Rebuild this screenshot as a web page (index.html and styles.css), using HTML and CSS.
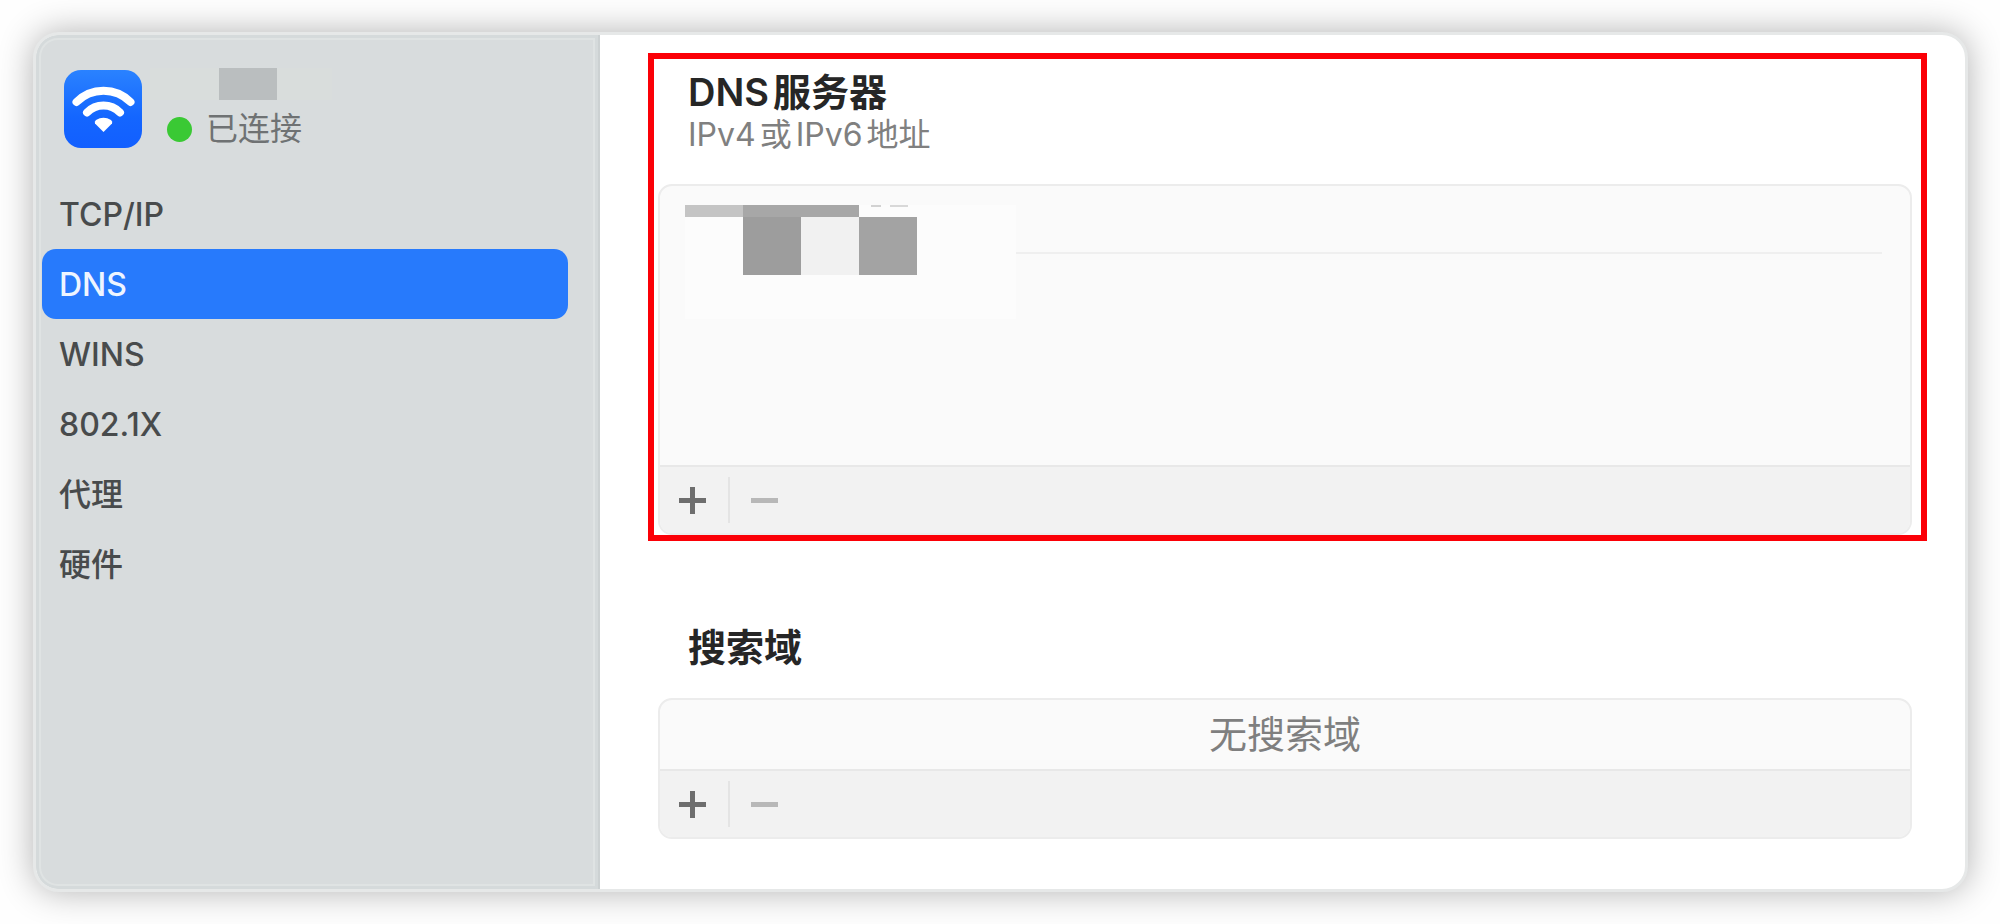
FILE: index.html
```
<!DOCTYPE html>
<html lang="zh-CN">

<head>
    <meta charset="UTF-8">
    <meta name="viewport" content="width=device-width, initial-scale=1.0">
    <title>DNS</title>
    <link rel="stylesheet" href="styles.css">
</head>

<body>
    <div class="window">
        <aside class="sidebar">
            <div class="network">
                <svg class="wifi-icon" viewBox="0 0 78 78" aria-hidden="true">
                    <defs>
                        <linearGradient id="wifi-bg" x1="0" y1="0" x2="0" y2="1">
                            <stop offset="0" stop-color="#2a82ff"/>
                            <stop offset="0.6" stop-color="#1466ff"/>
                            <stop offset="1" stop-color="#125fff"/>
                        </linearGradient>
                    </defs>
                    <rect width="78" height="78" rx="17" fill="url(#wifi-bg)"/>
                    <g fill="none" stroke="#fff" stroke-width="8" stroke-linecap="round">
                        <path d="M12.500 32a38 38 0 0 1 54 0"/>
                        <path d="M23 42.500a23 23 0 0 1 33 0"/>
                    </g>
                    <path d="M39.500 62l-8.500-8.500q-1-2 1-3.500q7.500-4.500 15 0q2 1.500 1 3.500z" fill="#fff"/>
                </svg>
                <div class="network-info">
                    <div class="name-mask"><span></span></div>
                    <div class="status"><span class="dot"></span>已连接</div>
                </div>
            </div>
            <nav class="menu">
                <a href="#tcpip">TCP/IP</a>
                <a href="#dns" class="active">DNS</a>
                <a href="#wins">WINS</a>
                <a href="#8021x">802.1X</a>
                <a href="#proxy">代理</a>
                <a href="#hardware">硬件</a>
            </nav>
        </aside>

        <main class="content">
            <section class="dns-servers">
                <h2>DNS<span class="cjk">服务器</span></h2>
                <p class="hint">IPv4<span class="cjk">或</span>IPv6<span class="cjk">地址</span></p>
                <div class="list-box">
                    <div class="list">
                        <div class="server-mask">
                            <span class="strip light"></span>
                            <span class="strip dark"></span>
                            <span class="strip dashes"></span>
                            <span class="cell first"></span>
                            <span class="cell second"></span>
                            <span class="cell third"></span>
                        </div>
                        <div class="row-line"></div>
                    </div>
                    <div class="toolbar">
                        <button type="button" class="add" aria-label="添加DNS服务器"></button>
                        <button type="button" class="remove" aria-label="移除DNS服务器" disabled></button>
                    </div>
                </div>
            </section>

            <section class="search-domains">
                <h2>搜索域</h2>
                <div class="list-box">
                    <div class="empty">无搜索域</div>
                    <div class="toolbar">
                        <button type="button" class="add" aria-label="添加搜索域"></button>
                        <button type="button" class="remove" aria-label="移除搜索域" disabled></button>
                    </div>
                </div>
            </section>
        </main>
    </div>
</body>

</html>
```
FILE: styles.css
```
* {
    box-sizing: border-box;
}

body {
    margin: 0;
    padding: 32px 32px 32px 33px;
    min-height: 100vh;
    display: flex;
    font-family: Inter, "Noto Sans CJK SC", sans-serif;
    background-color: #fefefe;
}

.window {
    flex: 1;
    display: flex;
    background-color: #fff;
    border: 3px solid #e6e8e8;
    border-radius: 26px;
    overflow: hidden;
    box-shadow: 0 0 34px rgba(0, 0, 0, 0.3);
}

.sidebar {
    width: 564px;
    padding: 33px 30px 0 6px;
    background-color: #d8dcdd;
    border-right: 2px solid #ccd1d2;
    border-radius: 22px 0 0 22px;
    box-shadow: inset 0 0 0 3px #d5dadb, inset 0 0 0 5px #dfe3e3;
}

.network {
    display: flex;
    gap: 8px;
    padding-left: 22px;
}

.wifi-icon {
    width: 78px;
    height: 78px;
    margin-top: 2px;
}

.name-mask {
    width: 182px;
    height: 32px;
    background-color: #d9dddc;
}

.name-mask span {
    display: block;
    width: 58px;
    height: 32px;
    margin-left: 69px;
    background-color: #babebf;
}

.status {
    display: flex;
    align-items: center;
    gap: 14px;
    margin-top: 9px;
    padding-left: 17px;
    font-size: 32px;
    line-height: 40px;
    color: #6f7273;
}

.dot {
    width: 25px;
    height: 25px;
    border-radius: 50%;
    background-color: #3ac934;
}

.menu {
    margin-top: 30px;
}

.menu a {
    display: block;
    padding: 2px 0 0 17px;
    border-radius: 14px;
    font-size: 32px;
    font-weight: 500;
    line-height: 68px;
    color: #484b4c;
    text-decoration: none;
}

.menu a.active {
    background-color: #277afc;
    color: #eef5ff;
}

.content {
    flex: 1;
    padding: 18px 38px 0 48px;
}

h2 {
    margin: 0;
    font-size: 38px;
    line-height: 44px;
    font-weight: 600;
    color: #262626;
}

.cjk {
    margin: 0 4px;
}

.dns-servers {
    padding: 11px 9px 0 4px;
    border: 6px solid #fb0007;
}

.dns-servers h2,
.dns-servers .hint,
.search-domains h2 {
    padding-left: 30px;
}

.hint {
    margin: 0;
    font-size: 32px;
    line-height: 42px;
    color: #808080;
}

.list-box {
    border: 2px solid #ececec;
    border-radius: 14px;
    background-color: #fafafa;
    overflow: hidden;
}

.dns-servers .list-box {
    margin-top: 28px;
}

.list {
    display: flex;
    height: 279px;
    padding: 19px 28px 0 25px;
}

/* blurred out server address */
.server-mask {
    display: grid;
    grid-template-columns: repeat(4, 58px);
    grid-template-rows: 12px 58px;
    width: 331px;
    height: 114px;
    background-color: #fcfcfc;
}

.strip.light {
    background-color: #c4c4c4;
}

.strip.dark {
    grid-column: 2 / 4;
    background-color: #a7a7a7;
}

.strip.dashes {
    background: linear-gradient(#d2d2d2, #d2d2d2) 12px 0 / 10px 2px no-repeat,
        linear-gradient(#d8d8d8, #d8d8d8) 31px 0 / 18px 2px no-repeat;
}

.cell.first {
    grid-column: 2;
    background-color: #9d9d9d;
}

.cell.second {
    background-color: #f1f1f1;
}

.cell.third {
    background-color: #a3a3a3;
}

.row-line {
    flex: 1;
    height: 2px;
    margin-top: 47px;
    background-color: #efefef;
}

.toolbar {
    display: flex;
    height: 68px;
    padding: 10px 0;
    border-top: 2px solid #e8e8e8;
    background-color: #f2f2f2;
}

.toolbar button {
    width: 68px;
    padding: 0;
    border: none;
    background: none;
    color: #6e6e6e;
    cursor: pointer;
}

.toolbar button::before {
    content: "";
    display: block;
    width: 27px;
    height: 27px;
    margin-left: 19px;
    background: linear-gradient(currentColor, currentColor) center / 27px 5px no-repeat,
        linear-gradient(currentColor, currentColor) center / 5px 27px no-repeat;
}

.toolbar .remove {
    border-left: 2px solid #e4e4e4;
    color: #b8b8b8;
    cursor: default;
}

.toolbar .remove::before {
    margin-left: 21px;
    background: linear-gradient(currentColor, currentColor) center / 27px 5px no-repeat;
}

.search-domains {
    margin-top: 84px;
    padding: 0 15px 0 10px;
}

.search-domains .list-box {
    margin-top: 29px;
}

.empty {
    font-size: 38px;
    line-height: 69px;
    text-align: center;
    color: #7f7f7f;
}
```
